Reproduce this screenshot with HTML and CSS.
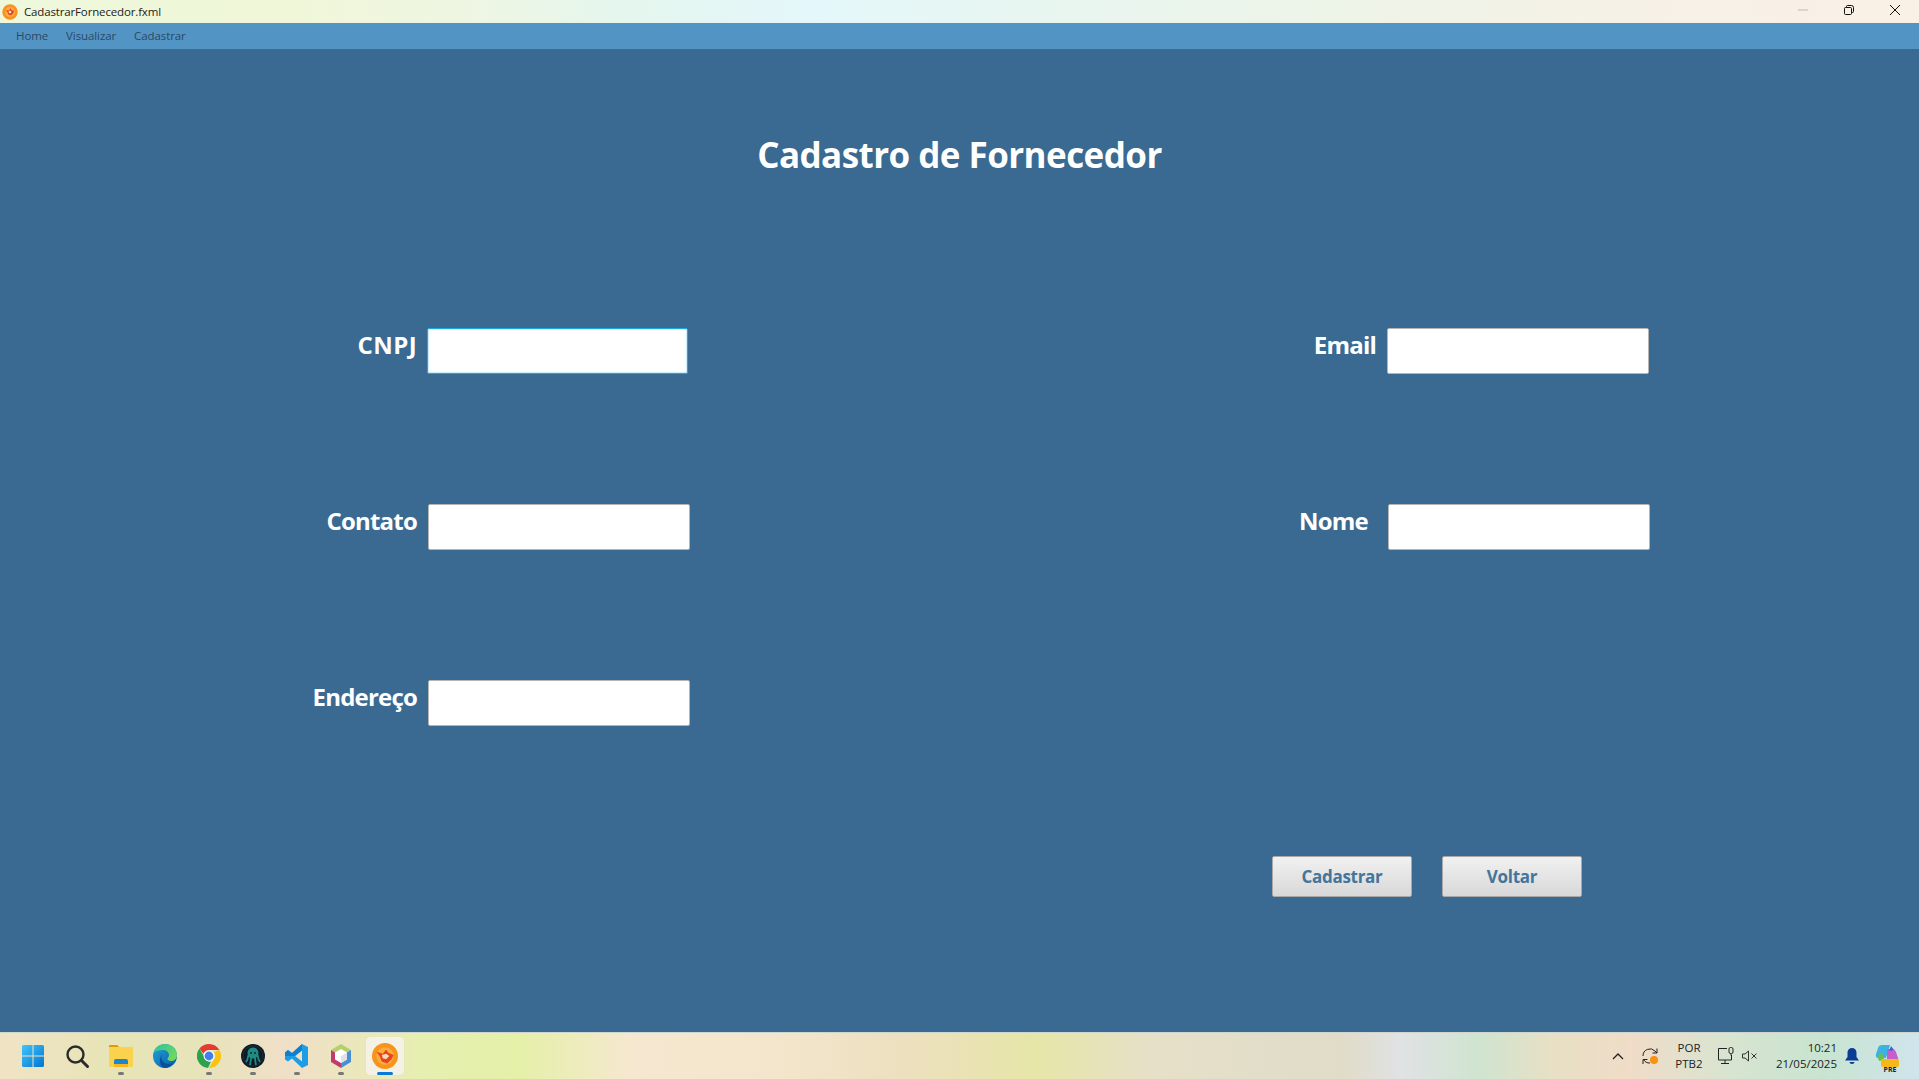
FILE: index.html
```html
<!DOCTYPE html>
<html lang="pt-BR">
<head>
    <meta charset="UTF-8" />
    <title>CadastrarFornecedor.fxml</title>
    <link rel="stylesheet" href="styles.css">
</head>
<body>
    <div class="titlebar">
        <svg class="app-logo" width="16" height="16" viewBox="0 0 24 24">
            <circle cx="12" cy="12" r="11.5" fill="#f7931e"/>
            <circle cx="12" cy="12" r="7.5" fill="#fbb040"/>
            <path d="M5 9l5 1 3-4 1 3 4 1-1 4-3 3-4-1-2-4z" fill="#e8432a"/>
            <circle cx="12" cy="12" r="2" fill="#fde3c8"/>
        </svg>
        <span class="titlebar-name">CadastrarFornecedor.fxml</span>
        <div class="win-btns">
            <span class="win-btn">
                <svg width="10" height="10" viewBox="0 0 10 10"><path d="M0 5h10" stroke="#bdb8ad" stroke-width="1"/></svg>
            </span>
            <span class="win-btn">
                <svg width="10" height="10" viewBox="0 0 10 10" fill="none" stroke="#111" stroke-width="1"><rect x=".5" y="2.5" width="7" height="7" rx="1"/><path d="M2.5 2.5v-1a1 1 0 0 1 1-1h4a2 2 0 0 1 2 2v4a1 1 0 0 1-1 1h-1"/></svg>
            </span>
            <span class="win-btn">
                <svg width="10" height="10" viewBox="0 0 10 10"><path d="M0 0l10 10M10 0L0 10" stroke="#111" stroke-width="1"/></svg>
            </span>
        </div>
    </div>

    <div class="menubar">
        <span class="menu-item">Home</span>
        <span class="menu-item">Visualizar</span>
        <span class="menu-item">Cadastrar</span>
    </div>

    <div class="main">
        <h1 class="page-title">Cadastro de Fornecedor</h1>
        <form class="form">
            <label class="field-label cnpj">CNPJ</label>
            <input class="field focused" type="text">
            <label class="field-label right">Email</label>
            <input class="field email" type="text">

            <label class="field-label">Contato</label>
            <input class="field" type="text">
            <label class="field-label right nome">Nome</label>
            <input class="field" type="text">

            <label class="field-label">Endereço</label>
            <input class="field" type="text">

            <div class="actions">
                <button class="btn" type="button">Cadastrar</button>
                <button class="btn" type="button">Voltar</button>
            </div>
        </form>
    </div>

    <div class="taskbar">
        <div class="task-apps">
            <span class="task-app">
                <svg width="24" height="24" viewBox="0 0 24 24">
                    <defs><linearGradient id="win" x1="0" y1="0" x2="1" y2="1"><stop offset="0" stop-color="#3ec6fb"/><stop offset="1" stop-color="#0674d2"/></linearGradient></defs>
                    <path d="M1 2.500A1.500 1.500 0 0 1 2.500 1h9v10.500H1zM12.500 1h9A1.500 1.500 0 0 1 23 2.500v9H12.500zM1 12.500h10.500V23h-9A1.500 1.500 0 0 1 1 21.500zM12.500 12.500H23v9a1.500 1.500 0 0 1-1.500 1.500h-9z" fill="url(#win)"/>
                </svg>
            </span>
            <span class="task-app">
                <svg width="24" height="24" viewBox="0 0 24 24" fill="none" stroke="#2b2b2b"><circle cx="10.500" cy="10.500" r="8" stroke-width="2.400"/><path d="M16.500 16.500l6 6" stroke-width="3" stroke-linecap="round"/></svg>
            </span>
            <span class="task-app dot">
                <svg width="24" height="24" viewBox="0 0 24 24">
                    <path d="M0 2a1 1 0 0 1 1-1h7l3 2.500h-11z" fill="#dd9a08"/>
                    <rect x="0" y="3" width="24" height="20" rx="1" fill="#fbd24e"/>
                    <path d="M5 23v-6a2 2 0 0 1 2-2h10a2 2 0 0 1 2 2v6z" fill="#1d86cf"/>
                    <rect x="5" y="20" width="14" height="3" fill="#f9b71c"/>
                </svg>
            </span>
            <span class="task-app">
                <svg width="24" height="24" viewBox="0 0 24 24">
                    <defs>
                        <linearGradient id="edgeA" x1="0" y1="0" x2="1" y2="1"><stop offset="0" stop-color="#1fa5d8"/><stop offset="1" stop-color="#0b5aa8"/></linearGradient>
                        <linearGradient id="edgeB" x1="0" y1="0" x2="1" y2="1"><stop offset="0" stop-color="#2bc3a0"/><stop offset="1" stop-color="#7fdc4e"/></linearGradient>
                    </defs>
                    <circle cx="12" cy="12" r="12" fill="url(#edgeA)"/>
                    <path d="M1 8C3 2 8 0 12 0c7 0 12 5 12 11 0 4-3 6-6 6-2 0-4-1-3.500-2.500 .5-1 1.500-1.500 1.500-3.500 0-3-3-5-6-5C6 6 3 7 1 8z" fill="url(#edgeB)"/>
                    <path d="M9.500 10c-2 2-1.500 7 2.500 9 3 1.500 6 1 8-.5-2 3.500-5 5.500-8 5.500-3 0-5-3-5-7 0-3 1-6 2.500-7z" fill="#0a4f9c"/>
                </svg>
            </span>
            <span class="task-app dot">
                <svg width="24" height="24" viewBox="0 0 24 24">
                    <path d="M12 0a12 12 0 0 1 10.400 6H12a6 6 0 0 0-5.600 3.800L2.500 4.600A12 12 0 0 1 12 0z" fill="#e53a30"/>
                    <path d="M22.400 6A12 12 0 0 1 12 24l5.200-9A6 6 0 0 0 16.800 8z" fill="#fbc216"/>
                    <path d="M2.500 4.600L7 12.500a6 6 0 0 0 7 5.100L11 24A12 12 0 0 1 2.500 4.600z" fill="#2ba24c"/>
                    <circle cx="12" cy="12" r="5.400" fill="#fff"/>
                    <circle cx="12" cy="12" r="4.400" fill="#3f7ff0"/>
                </svg>
            </span>
            <span class="task-app dot">
                <svg width="24" height="24" viewBox="0 0 24 24">
                    <circle cx="12" cy="12" r="12" fill="#0e1a26"/>
                    <circle cx="12" cy="12" r="10" fill="none" stroke="#17303a" stroke-width="1"/>
                    <circle cx="12" cy="9" r="5.500" fill="#1f8c83"/>
                    <path d="M7.500 11c-.5 3-1 5-2.500 7M10 13c0 3-.5 5-1 8M14 13c0 3 .5 5 1 8M16.500 11c.5 3 1 5 2.500 7" stroke="#1f8c83" stroke-width="1.800" fill="none"/>
                    <circle cx="10" cy="9" r=".9" fill="#0e1a26"/><circle cx="14" cy="9" r=".9" fill="#0e1a26"/>
                </svg>
            </span>
            <span class="task-app dot">
                <svg width="24" height="24" viewBox="0 0 24 24">
                    <path d="M17 0l6 3v18l-6 3-10-9.500-4 3L0 15.500V8.500L3 6l4 3zM17 6.500L10 12l7 5.500z" fill="#1c9de6"/>
                    <path d="M17 0L7 9 3 6 0 8.500V12h10zM10 12L17 6.500V0" fill="#0c75c4" opacity=".75"/>
                </svg>
            </span>
            <span class="task-app dot">
                <svg width="24" height="24" viewBox="0 0 24 24">
                    <path d="M12 0l10 6-10 6-10-6z" fill="#b4cf6c"/>
                    <path d="M2 6l10 6v12L2 18z" fill="#bf3c6b"/>
                    <path d="M22 6l-10 6v12l10-6z" fill="#4a8fd6"/>
                    <path d="M12 5l6 3.500v7L12 19l-6-3.500v-7z" fill="#fff"/>
                    <path d="M12 12l6-3.500v7L12 19z" fill="#dfe3e8"/>
                </svg>
            </span>
            <span class="task-app active">
                <svg width="26" height="26" viewBox="0 0 24 24">
                    <circle cx="12" cy="12" r="12" fill="#f7941d"/>
                    <circle cx="12" cy="12" r="8" fill="#fbae3c"/>
                    <path d="M4 8l6 2 3-4 2 3 5 2-2 4-4 4-5-2-2-5z" fill="#e9431f"/>
                    <path d="M9 11l4-1 3 2-3 3-3-1z" fill="#fcd9b8"/>
                </svg>
            </span>
        </div>

        <div class="tray">
            <span class="tray-slot chevron">
                <svg width="12" height="8" viewBox="0 0 12 8"><path d="M1 7l5-5 5 5" fill="none" stroke="#222" stroke-width="1.300"/></svg>
            </span>
            <span class="tray-slot sync">
                <svg width="18" height="18" viewBox="0 0 18 18">
                    <path d="M2 9a7 7 0 0 1 12-5l2 2M16 1.500V6h-4.500M9 16a7 7 0 0 1-6.500-3.500M2 17v-4.500h4.500" fill="none" stroke="#222" stroke-width="1"/>
                    <circle cx="13" cy="13" r="4" fill="#f7930e"/>
                </svg>
            </span>
            <span class="tray-slot lang"><span>POR</span><span>PTB2</span></span>
            <span class="tray-slot monitor">
                <svg width="18" height="18" viewBox="0 0 18 18" fill="none" stroke="#222" stroke-width="1"><path d="M10 1.500H1.500v11.500h13V8M8 13v3M4 16.500h8"/><rect x="12" y=".5" width="4" height="6" rx="1.500"/><path d="M14 6.500v2"/></svg>
            </span>
            <span class="tray-slot speaker">
                <svg width="16" height="12" viewBox="0 0 16 12" fill="none" stroke="#333" stroke-width="1"><path d="M.5 4v4h2.500l3.500 3V1L3 4zM9.500 3.500l5 5M14.500 3.500l-5 5"/></svg>
            </span>
            <span class="tray-slot clock"><span>10:21</span><span>21/05/2025</span></span>
            <span class="tray-slot bell">
                <svg width="14" height="16" viewBox="0 0 14 16"><path d="M7 0a4.500 4.500 0 0 1 4.500 4.500V9L14 12.500H0L2.500 9V4.500A4.500 4.500 0 0 1 7 0z" fill="#0a3c96"/><path d="M4.500 14a2.500 2 0 0 0 5 0z" fill="#0a3c96"/></svg>
            </span>
            <span class="tray-slot copilot">
                <svg width="24" height="24" viewBox="0 0 24 24">
                    <path d="M7 1h8l-4 13H3c-2 0-2.500-2-2-4l2-6c.5-2 2-3 4-3z" fill="#3cb3de"/>
                    <path d="M4 10l3-1 2 6-4 2c-2 0-2.500-4-1-7z" fill="#6cc04a"/>
                    <path d="M12 5h5c2 0 3 1 4 3l2 6c.5 2 0 4-2 4h-9z" fill="#c65fc9"/>
                    <path d="M16 2l3 4-5 1z" fill="#3a63d8"/>
                    <rect x="6" y="15" width="18" height="8" rx="2" fill="#f4b918"/>
                </svg>
                <span class="copilot-tag">PRE</span>
            </span>
        </div>
    </div>
</body>
</html>
```

FILE: styles.css
```css
*{ margin:0; padding:0; box-sizing:border-box; font-family:"Open Sans","Noto Sans",sans-serif;}
html,body{ height:100%;}
body{
    display: flex;
    flex-direction: column;
    overflow: hidden;
    background: #3a6a91;
}

/* window title */
.titlebar{
    display: flex;
    align-items: center;
    height: 23px;
    background: linear-gradient(90deg,#eef8dc 0,#f0f7d8 15%,#eef6e4 25%,#e4f6ee 33%,#e4f7fa 42%,#e8f6f0 55%,#eef4e8 70%,#f6f1e6 85%,#faf0e6 100%);
}
.app-logo{ margin:0 6px 0 2px;}
.titlebar-name{
    font-size: 11.5px;
    color: #222;
    letter-spacing: -.15px;
}
.win-btns{
    display: flex;
    margin-left: auto;
    padding-right: 1px;
    height: 100%;
}
.win-btn{
    display: flex;
    align-items: center;
    justify-content: center;
    width: 46px;
    height: 20px;
}

/* menu */
.menubar{
    display: flex;
    align-items: center;
    height: 26px;
    padding: 0 0 2px 16px;
    gap: 18px;
    background: #5295c5;
}
.menu-item{
    font-size: 11.5px;
    letter-spacing: -.1px;
    color: #2e4763;
}

/* form */
.main{
    flex: 1;
    padding-top: 81px;
}
.page-title{
    height: 50px;
    line-height: 50px;
    text-align: center;
    font-size: 35px;
    letter-spacing: -.55px;
    font-weight: 700;
    color: #fff;
}
.form{
    display: grid;
    grid-template-columns: 428px 262px 698px 262px;
    grid-auto-rows: 46px;
    row-gap: 130px;
    margin-top: 148px;
}
.field-label{
    grid-column: 1;
    padding-right: 11px;
    text-align: right;
    font-size: 24px;
    line-height: 34px;
    letter-spacing: -.8px;
    font-weight: 700;
    color: #fff;
}
.field-label.cnpj{ letter-spacing: .4px;}
.field-label.right{
    grid-column: 3;
    padding-right: 12px;
}
.field-label.nome{ padding-right: 20px;}
.field{
    width: 262px;
    height: 46px;
    background: #fff;
    border: 1px solid #b5b5b5;
    border-radius: 2px;
    outline: none;
}
.field.email{ margin-left: -1px;}
.field.focused{
    width: 261px;
    margin-left: -1px;
    border: 1px solid #1fa8e0;
    box-shadow: inset 0 0 0 1px #cdeefb;
}
.actions{
    grid-column: 3 / 5;
    grid-row: 4;
    justify-self: end;
    display: flex;
    gap: 30px;
    height: 41px;
    margin-right: 68px;
}
.btn{
    width: 140px;
    height: 41px;
    background: linear-gradient(#f1f1f1,#d8d8d8);
    border: 1px solid #a9a9a9;
    border-radius: 2px;
    font-size: 17px;
    letter-spacing: -.3px;
    font-weight: 700;
    color: #44759b;
}

/* windows taskbar */
.taskbar{
    display: flex;
    align-items: center;
    height: 47px;
    padding-left: 11px;
    border-top: 1px solid #cfd6cf;
    background: linear-gradient(90deg,#f0e3c5 0,#e8e4b8 5%,#e6e4b8 10%,#f0dfc8 15%,#e6efb0 22%,#e4f0a8 27%,#f6e8d0 33%,#f3e6cc 40%,#ede0c0 47%,#e6e6a8 54%,#e6e0c8 60%,#e0dcc8 70%,#e0e2e4 73%,#cfe4d0 77%,#e8e0c4 81%,#f0dcc8 85%,#d8e4d0 90%,#c8e4d0 95%,#d0e4ec 100%);
}
.task-apps{
    display: flex;
    align-items: center;
}
.task-app{
    position: relative;
    display: flex;
    align-items: center;
    justify-content: center;
    width: 44px;
    height: 38px;
}
.task-app.dot::after{
    content: "";
    position: absolute;
    left: 19px;
    bottom: 0;
    width: 6px;
    height: 3px;
    border-radius: 2px;
    background: #777;
}
.task-app.active{
    width: 38px;
    margin-left: 3px;
    border-radius: 4px;
    background: #f3f2e4;
    box-shadow: 0 0 1px #cfcfc0;
}
.task-app.active::after{
    content: "";
    position: absolute;
    left: 11px;
    bottom: 0;
    width: 16px;
    height: 3px;
    border-radius: 2px;
    background: #0a78d4;
}
.tray{
    display: flex;
    align-items: center;
    margin-left: auto;
    padding-right: 12px;
    height: 100%;
}
.tray-slot{
    display: flex;
    align-items: center;
    justify-content: center;
}
.chevron{ width:28px;}
.sync{ width:36px;}
.lang{
    flex-direction: column;
    width: 42px;
    font-size: 11.5px;
    line-height: 16px;
    color: #222;
}
.monitor{ width:32px;}
.speaker{ width:16px;}
.clock{
    flex-direction: column;
    align-items: flex-end;
    width: 79px;
    font-size: 11.5px;
    line-height: 16px;
    color: #222;
}
.bell{ width:30px;}
.copilot{
    position: relative;
    width: 40px;
}
.copilot-tag{
    position: absolute;
    left: 14px;
    top: 21px;
    width: 18px;
    text-align: center;
    font-size: 7px;
    line-height: 9px;
    font-weight: 700;
    color: #222;
}
```
